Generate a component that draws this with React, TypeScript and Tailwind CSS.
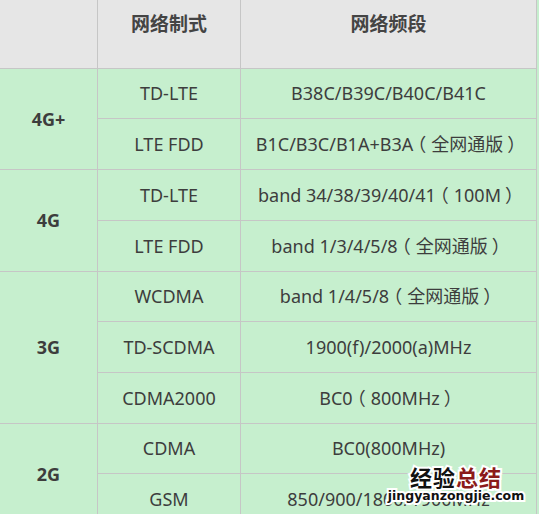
import React from "react";

const font = { fontFamily: '"Noto Sans", "Noto Sans CJK SC", sans-serif' };

type Row = { gen?: string; span?: number; mode: string; band: string };

const rows: Row[] = [
  { gen: "4G+", span: 2, mode: "TD-LTE", band: "B38C/B39C/B40C/B41C" },
  { mode: "LTE FDD", band: "B1C/B3C/B1A+B3A（全网通版）" },
  { gen: "4G", span: 2, mode: "TD-LTE", band: "band 34/38/39/40/41（100M）" },
  { mode: "LTE FDD", band: "band 1/3/4/5/8（全网通版）" },
  { gen: "3G", span: 3, mode: "WCDMA", band: "band 1/4/5/8（全网通版）" },
  { mode: "TD-SCDMA", band: "1900(f)/2000(a)MHz" },
  { mode: "CDMA2000", band: "BC0（800MHz）" },
  { gen: "2G", span: 2, mode: "CDMA", band: "BC0(800MHz)" },
  { mode: "GSM", band: "850/900/1800/1900MHz" },
];

const spanClass: Record<number, string> = {
  2: "row-span-2",
  3: "row-span-3",
};

function Band({ text }: { text: string }) {
  const parts = text.split(/([（）])/);
  return (
    <>
      {parts.map((p, i) =>
        p === "（" ? (
          <span key={i} className="relative left-[-5px]">（</span>
        ) : p === "）" ? (
          <span key={i} className="relative left-[4px]">）</span>
        ) : (
          <React.Fragment key={i}>{p}</React.Fragment>
        )
      )}
    </>
  );
}

export default function App() {
  const cell =
    "flex items-center justify-center border-r border-b border-[#c6c6c6] text-[18px] text-[#3d3d3d] whitespace-nowrap";
  return (
    <div className="relative w-[539px] h-[514px] overflow-hidden bg-[#c6efce]" style={font}>
      <div className="grid grid-cols-[98px_143px_296px] grid-rows-[69px_50px_51px_51px_51px_50px_51px_51px_50px_51px]">
        <div className={`${cell} bg-[#e6e6e6]`} />
        <div className={`${cell} bg-[#e6e6e6] font-bold text-[19px] text-[#444] pb-[19px]`}>网络制式</div>
        <div className={`${cell} bg-[#e6e6e6] font-bold text-[19px] text-[#444] pb-[19px]`}>网络频段</div>
        {rows.map((r, i) => (
          <React.Fragment key={i}>
            {r.gen && (
              <div className={`${cell} ${spanClass[r.span ?? 2]} font-bold`}>{r.gen}</div>
            )}
            <div className={cell}>{r.mode}</div>
            <div className={cell}>
              <Band text={r.band} />
            </div>
          </React.Fragment>
        ))}
      </div>
      <div className="absolute left-[386px] top-[465px] w-[140px] flex flex-col items-center leading-none">
        <div
          className="text-[22px] leading-[22px] font-bold tracking-[1px] [-webkit-text-stroke:4px_white] [paint-order:stroke_fill]"
          style={{ fontFamily: '"Noto Sans CJK SC", sans-serif' }}
        >
          <span className="text-[#111]">经验</span>
          <span className="text-[#8b1a1a]">总结</span>
        </div>
        <div
          className="mt-[1px] text-[12.5px] leading-[15px] font-bold text-[#111] [-webkit-text-stroke:4px_white] [paint-order:stroke_fill]"
          style={{ fontFamily: '"DejaVu Sans", sans-serif' }}
        >
          jingyanzongjie.com
        </div>
      </div>
    </div>
  );
}
